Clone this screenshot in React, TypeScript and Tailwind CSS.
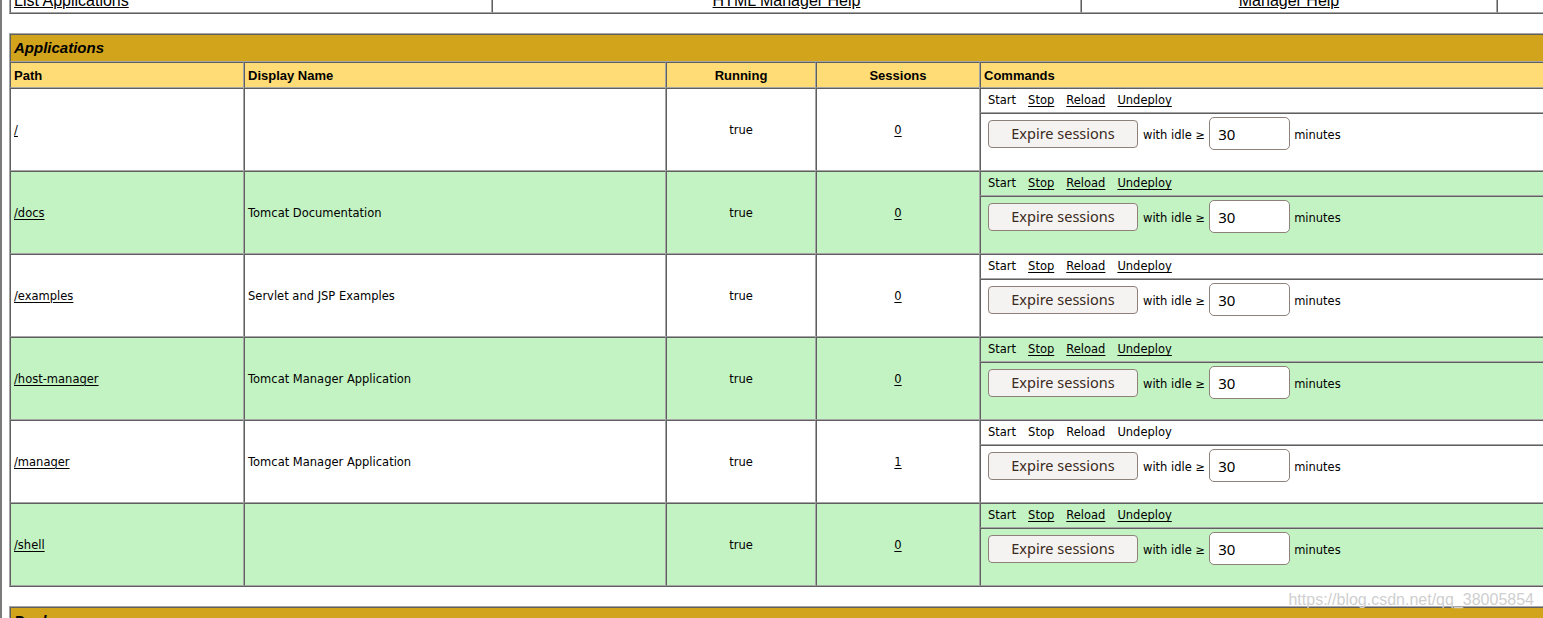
const cell =
  "border border-t-[#5f5f5f] border-l-[#5f5f5f] border-b-[#a6a6a6] border-r-[#a6a6a6] px-[3px]";
const tableBox =
  "table-fixed border-separate border-spacing-0 border border-t-[#a6a6a6] border-l-[#a6a6a6] border-b-[#5f5f5f] border-r-[#5f5f5f]";

const apps = [
  { path: "/", name: "", sessions: "0", running: false },
  { path: "/docs", name: "Tomcat Documentation", sessions: "0", running: false },
  { path: "/examples", name: "Servlet and JSP Examples", sessions: "0", running: false },
  { path: "/host-manager", name: "Tomcat Manager Application", sessions: "0", running: false },
  { path: "/manager", name: "Tomcat Manager Application", sessions: "1", running: true },
  { path: "/shell", name: "", sessions: "0", running: false },
];

function Commands({ self }: { self: boolean }) {
  const link = self ? "" : "underline underline-offset-2";
  return (
    <div className="flex items-center gap-[12px] pl-[4px] pt-[1px] font-['DejaVu_Sans',sans-serif] text-[11.5px] text-black">
      <span>Start</span>
      <span className={link}>Stop</span>
      <span className={link}>Reload</span>
      <span className={link}>Undeploy</span>
    </div>
  );
}

function ExpireForm() {
  return (
    <div className="flex h-[33px] items-center pl-[4px] font-['DejaVu_Sans',sans-serif] text-[11.5px] text-black">
      <button className="h-[28px] w-[150px] rounded-[4px] border border-[#8e817a] bg-[#f5f3f1] pt-[1px] font-['Noto_Sans',sans-serif] text-[14.5px] text-[#3a2a20]">
        Expire sessions
      </button>
      <span className="ml-[5px] mt-[5px]">with idle ≥</span>
      <div className="ml-[4px] flex h-[33px] w-[81px] items-center rounded-[5px] border border-[#8e817a] bg-white pl-[8px] pt-[2px] font-['Noto_Sans',sans-serif] text-[15px] text-black">
        30
      </div>
      <span className="ml-[4px] mt-[5px]">minutes</span>
    </div>
  );
}

export default function App() {
  return (
    <div className="relative h-[618px] w-[1543px] overflow-hidden border-l-2 border-[#7b7b7b] bg-white pl-[7px]">
      <div className="-mt-[14px]">
        {/* Manager links */}
        <table className={`${tableBox} w-[1640px] font-['Liberation_Sans',Arial,sans-serif] text-[16px] leading-[18px] text-black`}>
          <colgroup>
            <col className="w-[482px]" />
            <col className="w-[589px]" />
            <col className="w-[416px]" />
            <col />
          </colgroup>
          <tbody>
            <tr className="h-[26px]">
              <td className={`${cell} pt-[4px] pb-[2px] text-left align-bottom`}>
                <span className="underline">List Applications</span>
              </td>
              <td className={`${cell} pt-[4px] pb-[2px] text-center align-bottom`}>
                <span className="underline">HTML Manager Help</span>
              </td>
              <td className={`${cell} pt-[4px] pb-[2px] text-center align-bottom`}>
                <span className="underline">Manager Help</span>
              </td>
              <td className={`${cell} pt-[4px] pb-[2px] text-right align-bottom`}>
                <span className="underline">Server Status</span>
              </td>
            </tr>
          </tbody>
        </table>

        <div className="h-[19px]" />

        {/* Applications */}
        <table className={`${tableBox} w-[1640px]`}>
          <colgroup>
            <col className="w-[234px]" />
            <col className="w-[422px]" />
            <col className="w-[150px]" />
            <col className="w-[164px]" />
            <col />
          </colgroup>
          <tbody>
            <tr className="h-[28px]">
              <td
                colSpan={5}
                className={`${cell} bg-[#D2A41C] pt-[1px] text-left align-middle font-['Liberation_Sans',Arial,sans-serif] text-[15px] font-bold italic text-black`}
              >
                Applications
              </td>
            </tr>
            <tr className="h-[26px] font-['Liberation_Sans',Arial,sans-serif] text-[13px] font-bold text-black">
              <td className={`${cell} bg-[#FFDC75] pt-[1px] text-left align-middle`}>Path</td>
              <td className={`${cell} bg-[#FFDC75] pt-[1px] text-left align-middle`}>Display Name</td>
              <td className={`${cell} bg-[#FFDC75] pt-[1px] text-center align-middle`}>Running</td>
              <td className={`${cell} bg-[#FFDC75] pt-[1px] text-center align-middle`}>Sessions</td>
              <td className={`${cell} bg-[#FFDC75] pt-[1px] text-left align-middle`}>Commands</td>
            </tr>
            {apps.map((a, i) => {
              const bg = i % 2 === 1 ? "bg-[#C3F3C3]" : "bg-white";
              const text = "font-['DejaVu_Sans',sans-serif] text-[11.5px] text-black";
              return [
                <tr key={`${a.path}-a`} className={`h-[25px] ${bg}`}>
                  <td rowSpan={2} className={`${cell} ${text} pt-[2px] text-left align-middle`}>
                    <span className="underline underline-offset-2">{a.path}</span>
                  </td>
                  <td rowSpan={2} className={`${cell} ${text} pt-[2px] text-left align-middle`}>
                    {a.name}
                  </td>
                  <td rowSpan={2} className={`${cell} ${text} pt-[2px] text-center align-middle`}>
                    true
                  </td>
                  <td rowSpan={2} className={`${cell} ${text} pt-[2px] text-center align-middle`}>
                    <span className="underline underline-offset-2">{a.sessions}</span>
                  </td>
                  <td className={`${cell} align-middle`}>
                    <Commands self={a.running} />
                  </td>
                </tr>,
                <tr key={`${a.path}-b`} className={`h-[58px] ${bg}`}>
                  <td className={`${cell} align-top pt-[3px]`}>
                    <ExpireForm />
                  </td>
                </tr>,
              ];
            })}
          </tbody>
        </table>

        <div className="h-[19px]" />

        {/* Deploy */}
        <table className={`${tableBox} w-[1640px]`}>
          <tbody>
            <tr className="h-[28px]">
              <td className={`${cell} bg-[#D2A41C] pt-[1px] text-left align-middle font-['Liberation_Sans',Arial,sans-serif] text-[15px] font-bold italic text-black`}>
                Deploy
              </td>
            </tr>
          </tbody>
        </table>
      </div>

      <div className="pointer-events-none absolute right-[9px] top-[590px] font-['Liberation_Sans',Arial,sans-serif] text-[16px] leading-[20px] text-[#cfcfcf]">
        https://blog.csdn.net/qq_38005854
      </div>
    </div>
  );
}
